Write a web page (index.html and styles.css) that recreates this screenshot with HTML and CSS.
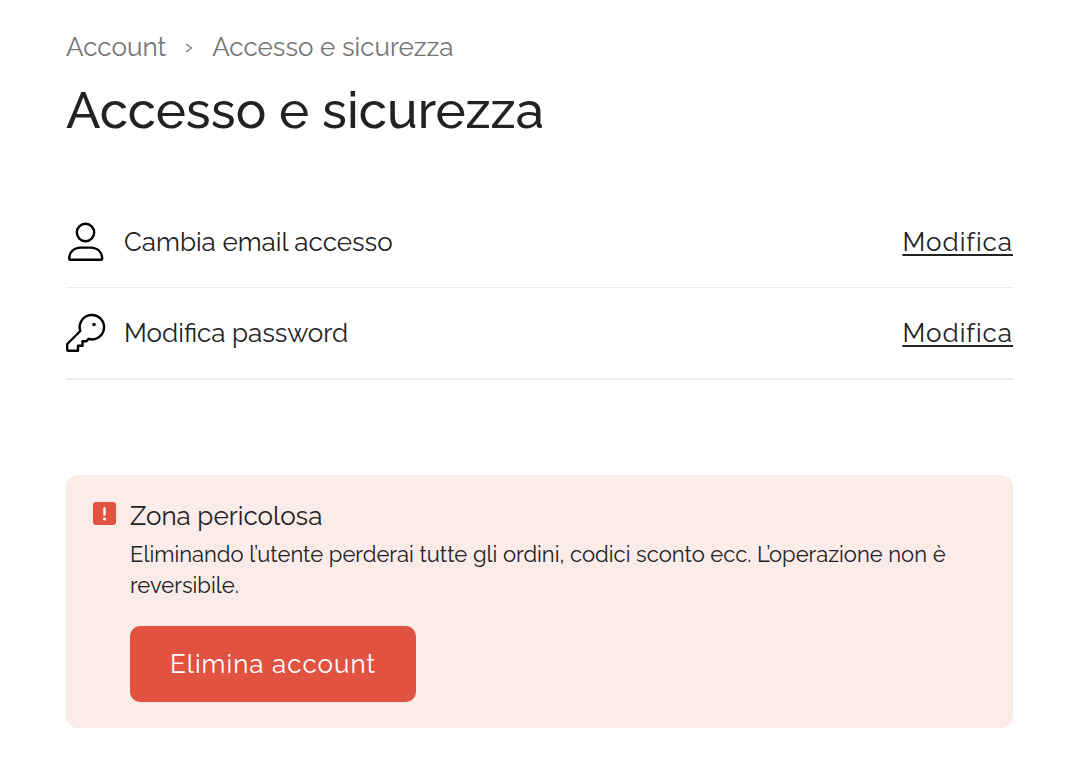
FILE: index.html
```html
<!DOCTYPE html>
<html lang="it">

<head>
    <meta charset="UTF-8">
    <meta name="viewport" content="width=device-width, initial-scale=1.0">
    <title>Accesso e sicurezza</title>
    <link rel="stylesheet" href="styles.css">
</head>

<body>
    <main class="page">
        <nav class="breadcrumb">
            <a href="#">Account</a>
            <svg class="chevron" viewBox="0 0 8 12" fill="none" stroke="currentColor" stroke-width="1.2">
                <path d="M1 3 6.500 7 1 11" />
            </svg>
            <a href="#">Accesso e sicurezza</a>
        </nav>
        <h1 class="title">Accesso e sicurezza</h1>

        <ul class="settings">
            <li class="setting">
                <svg class="setting-icon" viewBox="0 0 40 40" fill="none" stroke="#000" stroke-width="2.400" stroke-linejoin="round">
                    <circle cx="19.500" cy="10.500" r="8.700" />
                    <path d="M4.200 37.800h31c.6 0 1-.4 1-1 0-6.500-4.500-11.200-11.500-11.200H14.700C7.700 25.600 3.200 30.300 3.200 36.800c0 .6.4 1 1 1Z" />
                </svg>
                <span class="setting-name">Cambia email accesso</span>
                <a class="setting-link" href="#">Modifica</a>
            </li>
            <li class="setting">
                <svg class="setting-icon" viewBox="0 0 40 40" fill="none" stroke="#000" stroke-width="2.400" stroke-linejoin="round">
                    <path d="M14.300 18A12.200 12.200 0 1 1 22.500 25.900L20.500 28.200H16.500V32.700H12V37.800H2.500Q1.200 37.800 1.200 36.500V31Z" />
                    <circle cx="28" cy="11.500" r="1.800" fill="#000" stroke="none" />
                </svg>
                <span class="setting-name">Modifica password</span>
                <a class="setting-link" href="#">Modifica</a>
            </li>
        </ul>

        <section class="danger">
            <svg class="danger-icon" viewBox="0 0 24 24">
                <rect x="1" y="1" width="23" height="23" rx="3" fill="#e25241" />
                <path d="M12.500 7.500V13.500" stroke="#fff" stroke-width="2.400" stroke-linecap="round" />
                <circle cx="12.500" cy="18" r="1.600" fill="#fff" />
            </svg>
            <div class="danger-body">
                <h2 class="danger-title">Zona pericolosa</h2>
                <p class="danger-text">Eliminando l’utente perderai tutte gli ordini, codici sconto ecc. L’operazione non è reversibile.</p>
                <button class="danger-button" type="button">Elimina account</button>
            </div>
        </section>
    </main>
</body>

</html>
```

FILE: styles.css
```css
* {
    margin: 0;
    padding: 0;
    box-sizing: border-box;
}

body {
    background: #fff;
    color: #222;
    font-family: Raleway, Lato, sans-serif;
}

.page {
    padding: 31px 55px 40px 66px;
}

.breadcrumb {
    display: flex;
    align-items: center;
    gap: 19px;
    color: #757575;
    font-size: 26px;
    line-height: 32px;
}

.breadcrumb a {
    color: inherit;
    text-decoration: none;
}

.chevron {
    width: 8px;
    height: 12px;
}

.title {
    margin-top: 15px;
    font-size: 51px;
    font-weight: 500;
    line-height: 64px;
}

.settings {
    margin-top: 55px;
    list-style: none;
}

.setting {
    display: flex;
    align-items: center;
    gap: 18px;
    height: 91px;
    border-bottom: 1px solid #ebebeb;
}

.setting:last-child {
    height: 92px;
    border-bottom-width: 2px;
}

.setting-icon {
    width: 40px;
    height: 40px;
}

.setting-name {
    flex: 1;
    font-size: 26px;
}

.setting-link {
    color: inherit;
    font-size: 26px;
    letter-spacing: 1px;
    line-height: 32px;
    text-decoration-thickness: 2px;
    text-underline-offset: 3px;
}

.danger {
    display: flex;
    gap: 14px;
    margin-top: 95px;
    padding: 26px;
    border-radius: 12px;
    background: #fbebe9;
}

.danger-icon {
    flex: none;
    width: 24px;
    height: 24px;
}

.danger-title {
    font-size: 26px;
    font-weight: 400;
    line-height: 30px;
}

.danger-text {
    margin-top: 8px;
    font-size: 22px;
    line-height: 31px;
}

.danger-button {
    margin-top: 25px;
    padding: 22px 40px;
    border: none;
    border-radius: 10px;
    background: #e25241;
    color: #fff;
    font-family: inherit;
    font-size: 26px;
    letter-spacing: 1px;
    line-height: 32px;
    cursor: pointer;
}
```
